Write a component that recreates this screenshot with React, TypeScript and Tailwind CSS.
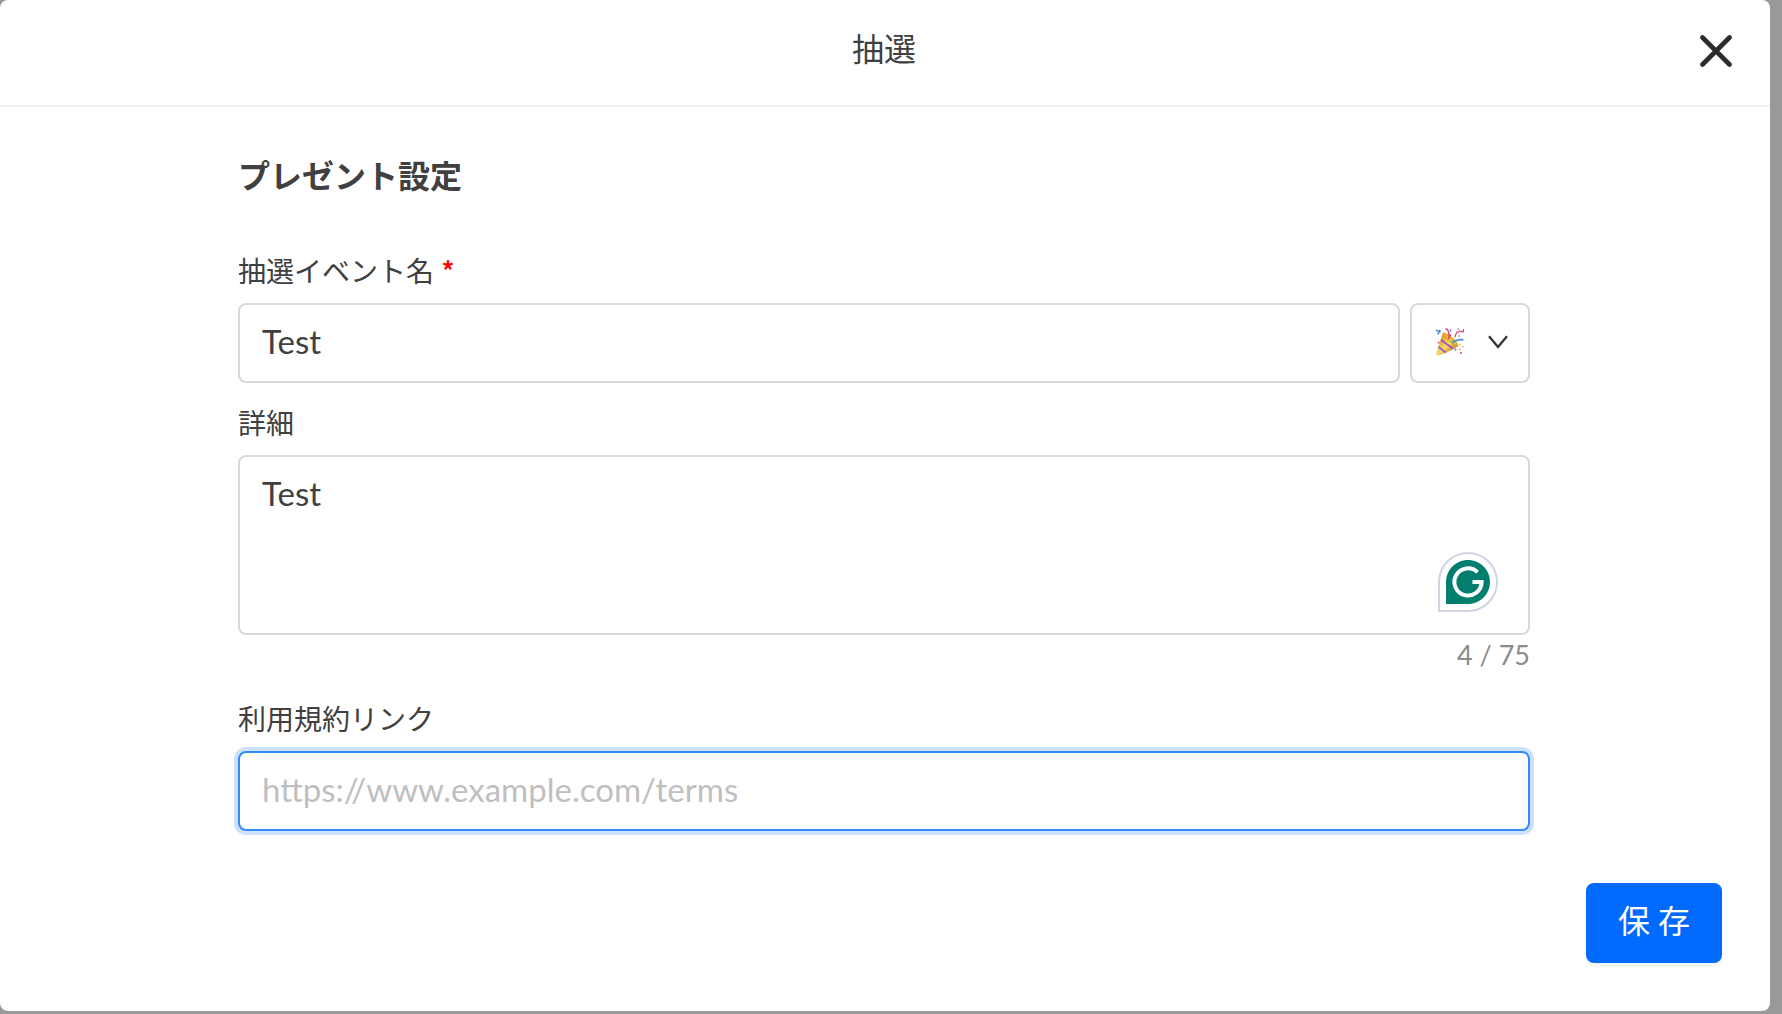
import React, { useState } from 'react';

const MAX_DETAIL = 75;

const FONT = "font-['Lato','Noto_Sans_CJK_JP',sans-serif]";
const FIELD = 'block w-full rounded-lg border-2 bg-white px-[22px] text-[33px] text-[#404040] outline-none';
const LABEL = 'mb-3 block text-[28px] leading-10 text-[#404040]';

const ICONS = [
    { value: 'party', label: 'クラッカー' },
    { value: 'gift', label: 'プレゼント' },
];

const CloseIcon = () => (
    <svg viewBox="0 0 32 32" className="h-8 w-8" fill="none" stroke="#2b2b2b" strokeWidth="4.6" strokeLinecap="round">
        <path d="M2.500 2.500 29.500 29.500M29.500 2.500 2.500 29.500" />
    </svg>
);

const PartyIcon = () => (
    <svg viewBox="0 0 28 28" className="h-7 w-7" fill="none">
        <defs>
            <linearGradient id="cone" x1="4" y1="12" x2="16" y2="24" gradientUnits="userSpaceOnUse">
                <stop stopColor="#d9a32c" />
                <stop offset=".5" stopColor="#f9db6a" />
                <stop offset="1" stopColor="#c58a22" />
            </linearGradient>
            <clipPath id="coneClip">
                <path d="M7 4.500 22.500 18C17 21.500 8 26 2 27.500.8 27.800 0 27 .2 26Z" />
            </clipPath>
        </defs>
        <path d="M7 4.500 22.500 18C17 21.500 8 26 2 27.500.8 27.800 0 27 .2 26Z" fill="url(#cone)" />
        <g clipPath="url(#coneClip)" stroke="#a052c8" strokeWidth="1.600">
            <path d="M4.500 11.500 18 21.500M2 18.500 11 25.500" />
        </g>
        <path d="M7 4.500c4-.5 15 8.500 15.500 13.500-4.500.5-15-8-15.500-13.500Z" fill="#e0a62e" />
        <path d="M9 6.500c3 1 9.500 6 11.500 10-4-1-10-6-11.500-10Z" fill="#f0c046" />
        <path d="M12.500 11c1-3 .5-6-.5-8.500-.6-1.700-1.800-1.800-2.500-1" stroke="#e6426e" strokeWidth="1.500" />
        <path d="M16 14.500c3-2 7-3.300 11.500-2.700" stroke="#4a90e0" strokeWidth="1.600" />
        <path d="M1 1.500c-1 1.500.8 2 2 1.200 1.300-.8 1.500.8.5 1.500S1.500 6 2.500 6.500" stroke="#3b74d1" strokeWidth="1.200" />
        <path d="M19.500 9c-1.500-1.500.8-2.500 1-4s2-.2 2.800-1.500c.5-1.200 1.700-.2 2.500.3 1.700.6 2-.8 1.700-2.800" stroke="#d93c65" strokeWidth="1.200" />
        <g fill="#e6426e">
            <circle cx="2.700" cy="14.500" r="1" />
            <circle cx="14.500" cy="7.500" r=".9" />
            <circle cx="25" cy="25" r="1" />
            <circle cx="22" cy="1" r=".8" />
        </g>
        <g fill="#3f77d8">
            <circle cx="14.500" cy="2.500" r=".9" />
            <circle cx="19.500" cy="21.500" r=".9" />
            <circle cx="23" cy="8" r=".8" />
        </g>
        <g fill="#e9a13b">
            <circle cx="23.500" cy="21.500" r=".9" />
            <circle cx="27" cy="18.500" r=".8" />
            <circle cx="24" cy="16.500" r=".8" />
        </g>
    </svg>
);

const ChevronIcon = () => (
    <svg viewBox="0 0 20 14" className="h-[14px] w-5" fill="none" stroke="#333" strokeWidth="2.300">
        <path d="M1 1.300 10 12 19 1.300" />
    </svg>
);

const GrammarlyIcon = () => (
    <svg viewBox="0 0 60 60" className="h-[60px] w-[60px]" fill="none">
        <path d="M1 59V30C1 14 14 1 30 1s29 13 29 29-13 29-29 29Z" fill="#fff" stroke="#cfd3e2" strokeWidth="2" />
        <path d="M8 52V30C8 17.800 17.800 8 30 8s22 9.800 22 22-9.800 22-22 22Z" fill="#027e6f" />
        <path d="M39.500 20.200A13.600 13.600 0 1 0 43.600 30H34.500" stroke="#fff" strokeWidth="4" />
    </svg>
);

export default function App() {
    const [name, setName] = useState('Test');
    const [detail, setDetail] = useState('Test');
    const [link, setLink] = useState('');
    const [icon, setIcon] = useState('party');

    return (
        <div className={`min-h-screen bg-[#999] pr-3 pb-[3px] ${FONT}`}>
            <div role="dialog" aria-labelledby="dialog-title" className="rounded-lg bg-white">
                <header className="relative flex h-[107px] items-center justify-center border-b-2 border-[#f0f0f0] pr-0.5 pb-2">
                    <h1 id="dialog-title" className="text-[32px] leading-12 text-[#404040]">抽選</h1>
                    <button type="button" aria-label="閉じる" className="absolute top-[35px] right-[38px]">
                        <CloseIcon />
                    </button>
                </header>

                <form onSubmit={(e) => e.preventDefault()}>
                    <div className="pt-[45px] pr-60 pl-[238px]">
                        <h2 className="mb-[51px] text-[32px] leading-12 font-bold text-[#404040]">プレゼント設定</h2>

                        <label htmlFor="name" className={LABEL}>
                            抽選イベント名 <span className="font-['Noto_Sans_CJK_JP',sans-serif] leading-none font-medium text-[#f00]">*</span>
                        </label>
                        <div className="mb-5 flex gap-[10px]">
                            <input
                                id="name"
                                type="text"
                                value={name}
                                onChange={(e) => setName(e.target.value)}
                                className={`${FIELD} h-20 min-w-0 flex-1 border-[#d9d9d9] pb-1`}
                            />
                            <div className="relative w-[120px]">
                                <select
                                    aria-label="アイコン"
                                    value={icon}
                                    onChange={(e) => setIcon(e.target.value)}
                                    className="h-20 w-full appearance-none rounded-lg border-2 border-[#d9d9d9] bg-white text-transparent outline-none"
                                >
                                    {ICONS.map(({ value, label }) => (
                                        <option key={value} value={value}>{label}</option>
                                    ))}
                                </select>
                                <div className="pointer-events-none absolute inset-0 flex items-center justify-between pr-[22px] pb-[2px] pl-[26px]">
                                    <PartyIcon />
                                    <ChevronIcon />
                                </div>
                            </div>
                        </div>

                        <label htmlFor="detail" className={LABEL}>詳細</label>
                        <div className="relative">
                            <textarea
                                id="detail"
                                value={detail}
                                maxLength={MAX_DETAIL}
                                onChange={(e) => setDetail(e.target.value)}
                                className={`${FIELD} h-[180px] resize-none border-[#d9d9d9] py-3 leading-12`}
                            />
                            <div className="absolute right-8 bottom-[23px]">
                                <GrammarlyIcon />
                            </div>
                        </div>
                        <p className="mb-6 text-right text-[27px] leading-10 text-[#8c8c8c]">
                            {detail.length} / {MAX_DETAIL}
                        </p>

                        <label htmlFor="link" className={LABEL}>利用規約リンク</label>
                        <input
                            id="link"
                            type="text"
                            value={link}
                            placeholder="https://www.example.com/terms"
                            onChange={(e) => setLink(e.target.value)}
                            className={`${FIELD} h-20 border-[#338aff] pb-1 ring-4 ring-[#cce1ff] placeholder:text-[#bfbfbf]`}
                        />
                    </div>

                    <footer className="flex justify-end px-12 pt-[52px] pb-12">
                        <button
                            type="submit"
                            className="h-20 w-[136px] rounded-lg bg-[#006aff] pb-1 text-[32px] text-white shadow-[0_4px_0_rgba(0,0,0,0.04)]"
                        >
                            保 存
                        </button>
                    </footer>
                </form>
            </div>
        </div>
    );
}
